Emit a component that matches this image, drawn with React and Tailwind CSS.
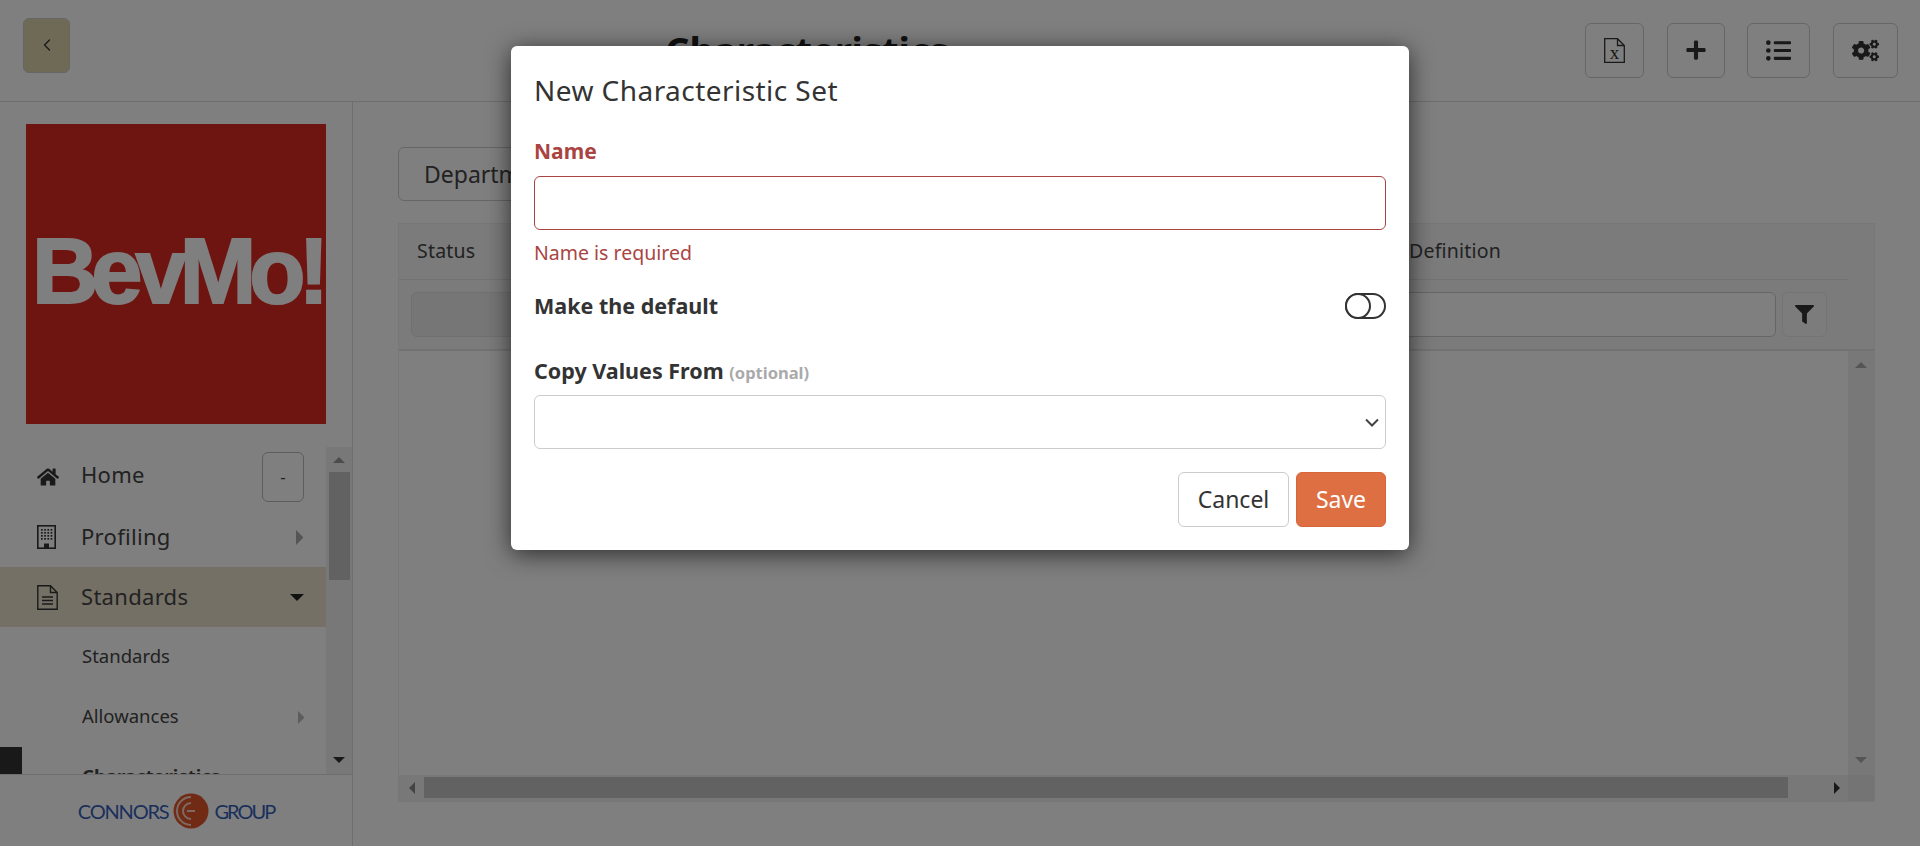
import React from "react";
import { FaHome, FaPlus, FaListUl, FaCogs, FaFilter } from "react-icons/fa";
import { FiChevronLeft } from "react-icons/fi";

const Arrow = ({ dir, size = 12, className }) => {
  const points = { up: "0,6 6,0 12,6", down: "0,0 12,0 6,6", left: "6,0 6,12 0,6", right: "0,0 0,12 6,6" }[dir];
  const vertical = dir === "up" || dir === "down";
  return (
    <svg width={vertical ? size : size / 2} height={vertical ? size / 2 : size} viewBox={vertical ? "0 0 12 6" : "0 0 6 12"} className={className}>
      <polygon points={points} fill="currentColor" />
    </svg>
  );
};

const HeaderButton = ({ width, children }) => (
  <button className={`${width} h-[55px] flex items-center justify-center rounded-md border border-[#ccc] text-[#333]`}>
    {children}
  </button>
);

const ExcelIcon = () => (
  <span className="relative w-[21px] h-[25px] flex items-end justify-center">
    <svg width="21" height="25" viewBox="0 0 21 25" className="absolute inset-0">
      <path d="M.7.7H13.5L20.3 7.5V24.3H.7ZM13.5.7V7.5H20.3" fill="none" stroke="#333" strokeWidth="1.3" />
    </svg>
    <span className="relative font-['Liberation_Serif',serif] text-[19px] leading-[20px] text-[#333]">x</span>
  </span>
);

// building-o style icon: outline with a grid of windows and a door
const BuildingIcon = () => (
  <svg width="19" height="24" viewBox="0 0 19 24">
    <rect x=".8" y=".8" width="17.4" height="22.4" fill="none" stroke="#333" strokeWidth="1.6" />
    {[4, 7, 10, 13].map((y) =>
      [4, 7.2, 10.4, 13.6].map((x) => <rect key={`${x}-${y}`} x={x} y={y} width="1.7" height="1.7" fill="#333" />)
    )}
    <rect x="7" y="18.5" width="5" height="4.5" fill="#333" />
  </svg>
);

const FileIcon = () => (
  <svg width="21" height="25" viewBox="0 0 21 25">
    <path d="M.8.8H13.5L20.2 7.5V24.2H.8ZM13.5.8V7.5H20.2" fill="none" stroke="#333" strokeWidth="1.4" />
    <path d="M5 12H16M5 15.5H16M5 19H16" stroke="#333" strokeWidth="1.4" />
  </svg>
);

const BevMoLogo = () => (
  <div className="w-[300px] h-[300px] bg-[#dc2a24] flex items-center justify-center">
    <span className="font-['Liberation_Sans',sans-serif] font-bold text-[92px] leading-none tracking-[-7px] text-white [-webkit-text-stroke:2px_white] blur-[0.5px] mt-[-6px] ml-[2px] whitespace-nowrap">
      BevMo!
    </span>
  </div>
);

const ConnorsLogo = () => (
  <div className="flex items-center font-['Lato',sans-serif] text-[20px] text-[#3560b8] tracking-[-1.2px] leading-none">
    <span>CONNORS</span>
    <svg width="36" height="36" viewBox="0 0 36 36" className="mx-[5px]">
      <circle cx="18" cy="18" r="17.5" fill="#e2562a" />
      <path d="M18 4A14 14 0 0 0 18 32M18 10A8 8 0 0 0 18 26M22 18H14" fill="none" stroke="#fff" strokeWidth="2" strokeOpacity="0.75" />
    </svg>
    <span className="tracking-[-2px]">GROUP</span>
  </div>
);

const NavRow = ({ icon, label, active, right, labelClass = "mb-[2px]" }) => (
  <div className={`h-[60px] flex items-center pl-[37px] pr-[22px] ${active ? "bg-[#e8e0ca]" : ""}`}>
    <span className="w-[44px] flex text-[#333]">{icon}</span>
    <span className={`text-[22px] text-[#444] tracking-[0.3px] ${labelClass}`}>{label}</span>
    <span className="ml-auto flex items-center">{right}</span>
  </div>
);

const SubRow = ({ label, bold, right }) => (
  <div className={`h-[60px] flex items-center pl-[82px] pr-[22px] text-[18.5px] text-[#444] ${bold ? "font-bold" : ""}`}>
    <span className="mb-[2px]">{label}</span>
    <span className="ml-auto">{right}</span>
  </div>
);

const Sidebar = () => (
  <aside className="relative w-[353px] shrink-0 border-r border-[#ddd] flex flex-col">
    <div className="pt-[22px] pl-[26px] pb-[23px]">
      <BevMoLogo />
    </div>
    <div className="h-[327px] shrink-0 flex overflow-hidden">
      <nav className="w-[326px] overflow-hidden">
        <NavRow
          icon={<FaHome size={22} />}
          label="Home"
          labelClass="mb-[5px]"
          right={<button className="w-[42px] h-[50px] rounded-md border border-[#bbb] text-[#444] text-[17px]">-</button>}
        />
        <NavRow icon={<BuildingIcon />} label="Profiling" right={<Arrow dir="right" size={15} className="text-[#aaa] mr-[1px]" />} />
        <NavRow icon={<FileIcon />} label="Standards" active right={<Arrow dir="down" size={14} className="text-[#222]" />} />
        <SubRow label="Standards" />
        <SubRow label="Allowances" right={<Arrow dir="right" size={13} className="text-[#bbb]" />} />
        <SubRow label="Characteristics" bold />
      </nav>
      <div className="w-[26px] bg-[#f1f1f1] flex flex-col items-center relative">
        <Arrow dir="up" className="absolute top-[10px] text-[#999]" />
        <div className="absolute top-[25px] w-[21px] h-[108px] bg-[#c4c4c4]" />
        <Arrow dir="down" className="absolute bottom-[11px] text-[#333]" />
      </div>
    </div>
    <div className="flex-1 border-t border-[#ddd] flex items-center justify-center">
      <ConnorsLogo />
    </div>
    <div className="absolute left-0 top-[645px] w-[22px] h-[27px] bg-[#333]" />
  </aside>
);

const DataTable = () => (
  <div className="w-[1477px] h-[579px] border border-[#eee] flex flex-col">
    <div className="flex-1 min-h-0 flex flex-col">
      <div className="bg-[#f6f6f6]">
        <div className="h-[56px] border-b border-[#e4e4e4] mr-[26px] flex items-center text-[19.5px] text-[#444] tracking-[0.2px] relative">
          <span className="ml-[18px] mb-[1px]">Status</span>
          <span className="absolute left-[1010px] mb-[1px]">Definition</span>
        </div>
      </div>
      <div className="h-[71px] bg-[#f6f6f6] border-b-2 border-[#e4e4e4] flex items-center pl-[12px]">
        <div className="w-[560px] h-[45px] rounded-md border border-[#e0e0e0] bg-[#ececec]" />
        <div className="ml-auto w-[700px] h-[45px] rounded-md border border-[#ccc] bg-white" />
        <button className="ml-[6px] mr-[47px] w-[45px] h-[45px] rounded-md border border-[#e8e8e8] bg-[#f8f8f8] flex items-center justify-center text-[#333]">
          <FaFilter size={19} />
        </button>
      </div>
      <div className="flex-1 min-h-0 flex">
        <div className="flex-1" />
        <div className="w-[26px] bg-[#f1f1f1] relative flex flex-col items-center">
          <Arrow dir="up" className="absolute top-[11px] text-[#aaa]" />
          <Arrow dir="down" className="absolute bottom-[12px] text-[#aaa]" />
        </div>
      </div>
    </div>
    <div className="h-[26px] flex items-center bg-[#f1f1f1] relative">
      <Arrow dir="left" className="absolute left-[10px] text-[#888]" />
      <div className="absolute left-[25px] top-[2px] w-[1364px] h-[21px] bg-[#c4c4c4]" />
      <Arrow dir="right" className="absolute left-[1435px] text-[#333]" />
      <div className="absolute right-0 top-0 w-[26px] h-[26px] bg-[#e8e8e8]" />
    </div>
  </div>
);

const Modal = () => (
  <div className="w-[898px] h-[504px] bg-white rounded-md shadow-[0_4px_24px_rgba(0,0,0,0.65)] pl-[23px] pr-[23px] pt-[22px] flex flex-col text-[#333]">
    <h2 className="text-[28px] leading-[44px] h-[44px] font-normal tracking-[0.45px] text-[#333]">New Characteristic Set</h2>
    <label className="mt-[25px] text-[21px] leading-[28px] font-bold text-[#a94442]">Name</label>
    <input className="mt-[11px] h-[54px] w-full rounded-md border border-[#a94442] bg-white outline-none" />
    <p className="mt-[9px] text-[19.5px] leading-[28px] text-[#a94442]">Name is required</p>
    <div className="mt-[19px] h-[40px] flex items-center justify-between">
      <span className="text-[21.5px] font-bold text-[#333]">Make the default</span>
      <span className="relative w-[41px] h-[26px] rounded-full border-2 border-[#333]">
        <span className="absolute left-[-2px] top-[-2px] w-[26px] h-[26px] rounded-full border-2 border-[#333] bg-white" />
      </span>
    </div>
    <div className="mt-[31px] text-[21.5px] leading-[28px] font-bold text-[#333]">
      Copy Values From <span className="text-[16.5px] text-[#aaa]">(optional)</span>
    </div>
    <div className="mt-[8px] h-[54px] w-full rounded-md border border-[#ccc] bg-white flex items-center justify-end pr-[6px]">
      <svg width="14" height="9" viewBox="0 0 14 9">
        <path d="M1 1.5L7 7.5L13 1.5" fill="none" stroke="#444" strokeWidth="2" />
      </svg>
    </div>
    <div className="mt-[23px] flex justify-end gap-[7px]">
      <button className="w-[111px] h-[55px] rounded-md border border-[#ccc] bg-white text-[23px] text-[#333]">Cancel</button>
      <button className="w-[90px] h-[55px] rounded-md border border-[#d9653a] bg-[#de6f43] text-[23px] text-white">Save</button>
    </div>
  </div>
);

export default function App() {
  return (
    <div className="relative w-full h-[846px] overflow-hidden bg-white font-['Noto_Sans',sans-serif]">
      <header className="h-[102px] border-b border-[#ddd] flex items-center pl-[23px] pr-[22px]">
        <button className="w-[47px] h-[55px] mb-[11px] rounded-md border border-[#ccc] bg-[#ddd5ac] flex items-center justify-center text-[#333]">
          <FiChevronLeft size={20} strokeWidth={1.5} />
        </button>
        <h1 className="ml-[595px] text-[38px] font-bold text-[#222]">Characteristics</h1>
        <div className="ml-auto flex gap-[23px] mb-[1px]">
          <HeaderButton width="w-[59px]"><ExcelIcon /></HeaderButton>
          <HeaderButton width="w-[58px]"><FaPlus size={22} /></HeaderButton>
          <HeaderButton width="w-[63px] -ml-[1px]"><FaListUl size={25} /></HeaderButton>
          <HeaderButton width="w-[65px]"><FaCogs size={27} /></HeaderButton>
        </div>
      </header>
      <div className="flex h-[744px]">
        <Sidebar />
        <main className="flex-1 pl-[45px] pt-[45px]">
          <div className="w-[300px] h-[54px] rounded-md border border-[#ccc] flex items-center pl-[25px] text-[23px] text-[#444] mb-[22px]">
            Department
          </div>
          <DataTable />
        </main>
      </div>

      {/* dimmed backdrop + dialog */}
      <div className="absolute inset-0 bg-black/50 flex justify-center pt-[46px]">
        <Modal />
      </div>
    </div>
  );
}
